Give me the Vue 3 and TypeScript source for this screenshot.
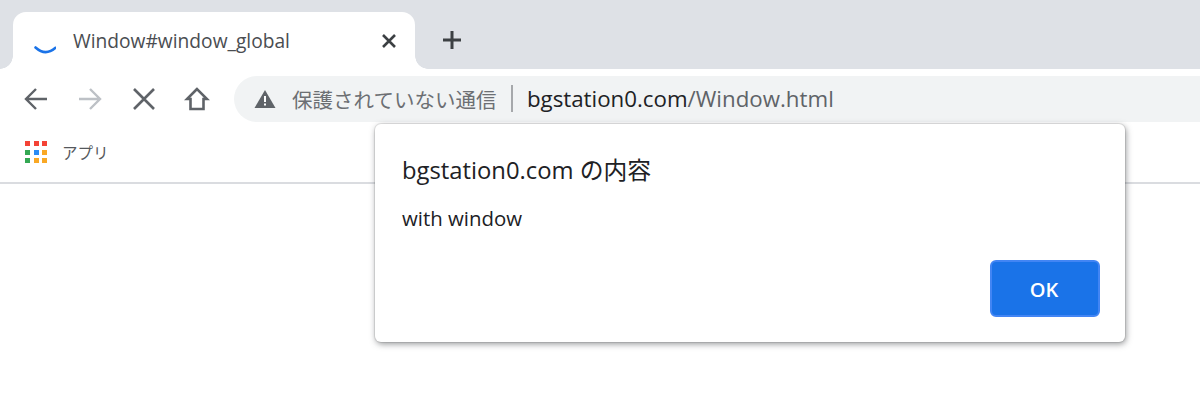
<script setup lang="ts">
const dots: string[] = ['#f44336','#f44336','#f44336','#34a853','#2a8cf5','#f9a825','#34a853','#f9a825','#f9a825']
</script>

<template>
  <div class="page">
    <div class="strip">
      <div class="tab">
        <svg class="spinner" width="24" height="24" viewBox="0 0 24 24"><path d="M3.500 17.500Q13.500 26.500 23.500 17.800" fill="none" stroke="#1a73e8" stroke-width="2.600" stroke-linecap="round"/></svg>
        <span class="tab-title">Window#window_global</span>
        <svg class="tab-close" width="16" height="16" viewBox="0 0 16 16"><path d="M2 2L14 14M14 2L2 14" stroke="#3c4043" stroke-width="2.600"/></svg>
      </div>
      <svg class="new-tab" width="20" height="20" viewBox="0 0 20 20"><path d="M10 1V19M1 10H19" stroke="#3c4043" stroke-width="3"/></svg>
    </div>

    <div class="toolbar">
      <div class="nav">
        <svg width="26" height="26" viewBox="0 0 26 26"><path d="M24 13H3M13 3L3 13L13 23" fill="none" stroke="#5f6368" stroke-width="2.400"/></svg>
        <svg width="26" height="26" viewBox="0 0 26 26"><path d="M2 13H23M13 3L23 13L13 23" fill="none" stroke="#bdc1c6" stroke-width="2.400"/></svg>
        <svg width="26" height="26" viewBox="0 0 26 26"><path d="M3 3L23 23M23 3L3 23" fill="none" stroke="#5f6368" stroke-width="2.600"/></svg>
        <svg width="26" height="26" viewBox="0 0 26 26"><path d="M13 3L3 13H6.500V23H19.500V13H23Z" fill="none" stroke="#5f6368" stroke-width="2.600"/></svg>
      </div>
      <div class="omnibox">
        <svg class="warn" width="22" height="20" viewBox="0 0 22 20"><path d="M11 1L21.500 19H.5Z" fill="#5f6368"/><path d="M10 7H12V13H10ZM10 14.500H12V16.500H10Z" fill="#fff"/></svg>
        <span class="chip">保護されていない通信</span>
        <span class="sep"></span>
        <span class="url"><b>bgstation0.com</b>/Window.html</span>
      </div>
    </div>

    <div class="bookmarks">
      <div class="apps">
        <i v-for="(c, i) in dots" :key="i" :style="{ background: c }"></i>
      </div>
      <span class="apps-label">アプリ</span>
    </div>

    <div class="dialog">
      <div class="d-title">bgstation0.com の内容</div>
      <div class="d-msg">with window</div>
      <div class="d-actions"><button class="ok" type="button">OK</button></div>
    </div>
  </div>
</template>

<style>
html, body { margin: 0; background: #fff; }
</style>

<style scoped>
.page {
  position: relative;
  width: 1200px;
  height: 418px;
  overflow: hidden;
  background: #fff;
  font-family: "Open Sans", "Noto Sans CJK JP", sans-serif;
}
.strip {
  height: 69px;
  background: #dee1e6;
  display: flex;
  align-items: flex-end;
  padding-left: 13px;
  box-sizing: border-box;
}
.tab {
  position: relative;
  width: 402px;
  height: 57px;
  background: #fff;
  border-radius: 13px 13px 0 0;
  display: flex;
  align-items: center;
  padding: 0 18px 0 19px;
  box-sizing: border-box;
}
.tab::before, .tab::after {
  content: "";
  position: absolute;
  bottom: 0;
  width: 13px;
  height: 13px;
}
.tab::before { left: -13px; background: radial-gradient(circle at 0 0, #dee1e6 12.500px, #fff 13px); }
.tab::after { right: -13px; background: radial-gradient(circle at 100% 0, #dee1e6 12.500px, #fff 13px); }
.spinner { margin-right: 17px; flex: none; position: relative; top: 1px; }
.tab-title { flex: 1; font-size: 19.200px; color: #4a4d51; }
.tab-close { flex: none; }
.new-tab { margin: 0 0 19px 27px; }
.toolbar {
  height: 61px;
  display: flex;
  align-items: center;
  padding: 6px 0 8px 23px;
  box-sizing: border-box;
}
.nav { display: flex; align-items: center; gap: 28px; margin-right: 24px; }
.nav svg:last-child { margin-left: -1px; }
.omnibox {
  flex: 1;
  height: 46px;
  background: #f1f3f4;
  border-radius: 23px 0 0 23px;
  display: flex;
  align-items: center;
  padding-left: 20px;
}
.warn { flex: none; margin-right: 16px; }
.chip { font-size: 20.500px; color: #6c6f73; white-space: nowrap; }
.sep { width: 1.500px; height: 27px; background: #a6a8ab; margin: 0 14px 0 15px; }
.url { font-size: 22.300px; color: #5f6368; white-space: nowrap; }
.url b { font-weight: 400; color: #202124; }
.bookmarks {
  height: 54px;
  border-bottom: 2px solid #dadce0;
  box-sizing: border-box;
  display: flex;
  align-items: flex-start;
  padding: 11px 0 0 25px;
}
.apps {
  width: 22px;
  display: grid;
  grid-template-columns: repeat(3, 5px);
  grid-auto-rows: 5px;
  gap: 3.500px;
}
.apps i { display: block; }
.apps-label { font-size: 15.500px; color: #55585c; margin: -2px 0 0 15px; line-height: 26px; font-family: "Noto Sans CJK JP", sans-serif; }
.dialog {
  position: absolute;
  left: 375px;
  top: 124px;
  width: 750px;
  height: 218px;
  box-sizing: border-box;
  background: #fff;
  border-radius: 6px;
  box-shadow: 0 0 0 1px rgba(0,0,0,.08), 1px 2px 6px rgba(60,64,67,.55);
  padding: 29px 25px 0 27px;
  display: flex;
  flex-direction: column;
}
.d-title { font-size: 23.800px; line-height: 34px; color: #202124; }
.d-msg { font-size: 20.400px; line-height: 26px; color: #202124; margin-top: 18px; }
.d-actions { margin-top: auto; display: flex; justify-content: flex-end; padding-bottom: 25px; }
.ok {
  width: 110px;
  height: 57px;
  border: 2px solid #4285f4;
  border-radius: 6px;
  background: #1a73e8;
  color: #fff;
  font: 600 20px "Open Sans", sans-serif;
  padding: 1px 2px 0 0;
}
</style>
